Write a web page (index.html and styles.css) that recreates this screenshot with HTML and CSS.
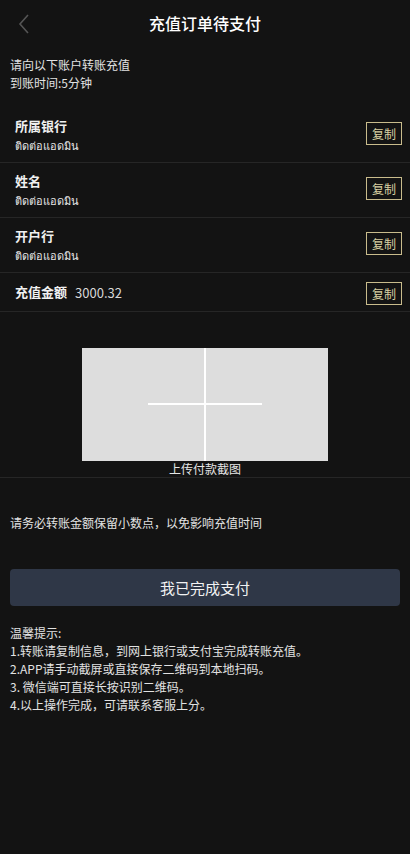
FILE: index.html
```html
<!DOCTYPE html>
<html lang="zh-CN">
<head>
<meta charset="utf-8">
<title>充值订单待支付</title>
<link rel="stylesheet" href="styles.css">
</head>
<body>
<header class="header">
  <svg class="back" width="12" height="20" viewBox="0 0 12 20"><path d="M10 1 L2 10 L10 19" fill="none" stroke="#555" stroke-width="1.6"/></svg>
  <h1 class="title">充值订单待支付</h1>
</header>
<div class="intro">
  <p>请向以下账户转账充值</p>
  <p>到账时间:5分钟</p>
</div>
<div class="list">
  <div class="row">
    <div class="info">
      <div class="label">所属银行</div>
      <div class="value">ติดต่อแอดมิน</div>
    </div>
    <span class="copy">复制</span>
  </div>
  <div class="row">
    <div class="info">
      <div class="label">姓名</div>
      <div class="value">ติดต่อแอดมิน</div>
    </div>
    <span class="copy">复制</span>
  </div>
  <div class="row">
    <div class="info">
      <div class="label">开户行</div>
      <div class="value">ติดต่อแอดมิน</div>
    </div>
    <span class="copy">复制</span>
  </div>
  <div class="row row-amount">
    <div class="info inline">
      <span class="label">充值金额</span>
      <span class="amount">3000.32</span>
    </div>
    <span class="copy">复制</span>
  </div>
</div>
<div class="upload">
  <div class="upload-box">
    <span class="vline"></span>
    <span class="hline"></span>
  </div>
  <div class="upload-text">上传付款截图</div>
</div>
<p class="notice">请务必转账金额保留小数点，以免影响充值时间</p>
<div class="btn-wrap"><button class="btn">我已完成支付</button></div>
<div class="tips">
  <p>温馨提示:</p>
  <p>1.转账请复制信息，到网上银行或支付宝完成转账充值。</p>
  <p>2.APP请手动截屏或直接保存二维码到本地扫码。</p>
  <p>3. 微信端可直接长按识别二维码。</p>
  <p>4.以上操作完成，可请联系客服上分。</p>
</div>
</body>
</html>
```
FILE: styles.css
```css
* { box-sizing: border-box; }
html, body { margin: 0; padding: 0; }
body {
  background: #131313;
  color: #e2e2e2;
  font-family: "Noto Sans CJK SC", "Noto Sans", "DejaVu Sans", sans-serif;
  font-size: 12px;
  width: 410px;
  min-height: 854px;
}
p { margin: 0; }
.header {
  position: relative;
  height: 46px;
  display: flex;
  align-items: center;
  justify-content: center;
}
.back {
  position: absolute;
  left: 18px;
  top: 14px;
}
.title {
  margin: 0;
  font-size: 16px;
  font-weight: 500;
  color: #fff;
}
.intro {
  padding: 10px 10px 0;
  line-height: 18px;
}
.list { margin-top: 16px; }
.row {
  display: flex;
  align-items: center;
  justify-content: space-between;
  height: 55px;
  padding: 0 8px 0 15px;
  border-bottom: 1px solid #262626;
}
.info { display: flex; flex-direction: column; gap: 2px; }
.info.inline { flex-direction: row; align-items: center; gap: 8px; }
.label {
  font-size: 13px;
  font-weight: 700;
  color: #f0f0f0;
  line-height: 18px;
}
.value {
  font-size: 11px;
  color: #e6e6e6;
  line-height: 16px;
  font-weight: 400;
}
.amount {
  font-size: 13px;
  color: #d8d8d8;
}
.row-amount { height: 39px; }
.copy {
  display: inline-flex;
  align-items: center;
  justify-content: center;
  width: 36px;
  height: 23px;
  border: 1px solid #c9bc8c;
  color: #d9d0a3;
  font-size: 12px;
  margin-top: -4px;
}
.row-amount .copy { margin-top: 2px; }
.upload {
  padding-top: 36px;
  display: flex;
  flex-direction: column;
  align-items: center;
  border-bottom: 1px solid #262626;
}
.upload-box {
  position: relative;
  width: 246px;
  height: 113px;
  background: #dddddd;
}
.vline {
  position: absolute;
  left: 122px;
  top: 0;
  width: 1.5px;
  height: 113px;
  background: #fff;
}
.hline {
  position: absolute;
  left: 66px;
  top: 55px;
  width: 114px;
  height: 1.5px;
  background: #fff;
}
.upload-text {
  font-size: 12px;
  line-height: 16px;
  color: #e6e6e6;
}
.notice {
  padding: 36px 10px 0;
  line-height: 18px;
}
.btn-wrap { padding: 37px 10px 0; }
.btn {
  width: 100%;
  height: 37px;
  border: none;
  border-radius: 4px;
  background: #2f3747;
  color: #f2f2f2;
  font-family: inherit;
  font-size: 15px;
}
.tips {
  padding: 18px 10px 0;
  line-height: 18px;
}
```
